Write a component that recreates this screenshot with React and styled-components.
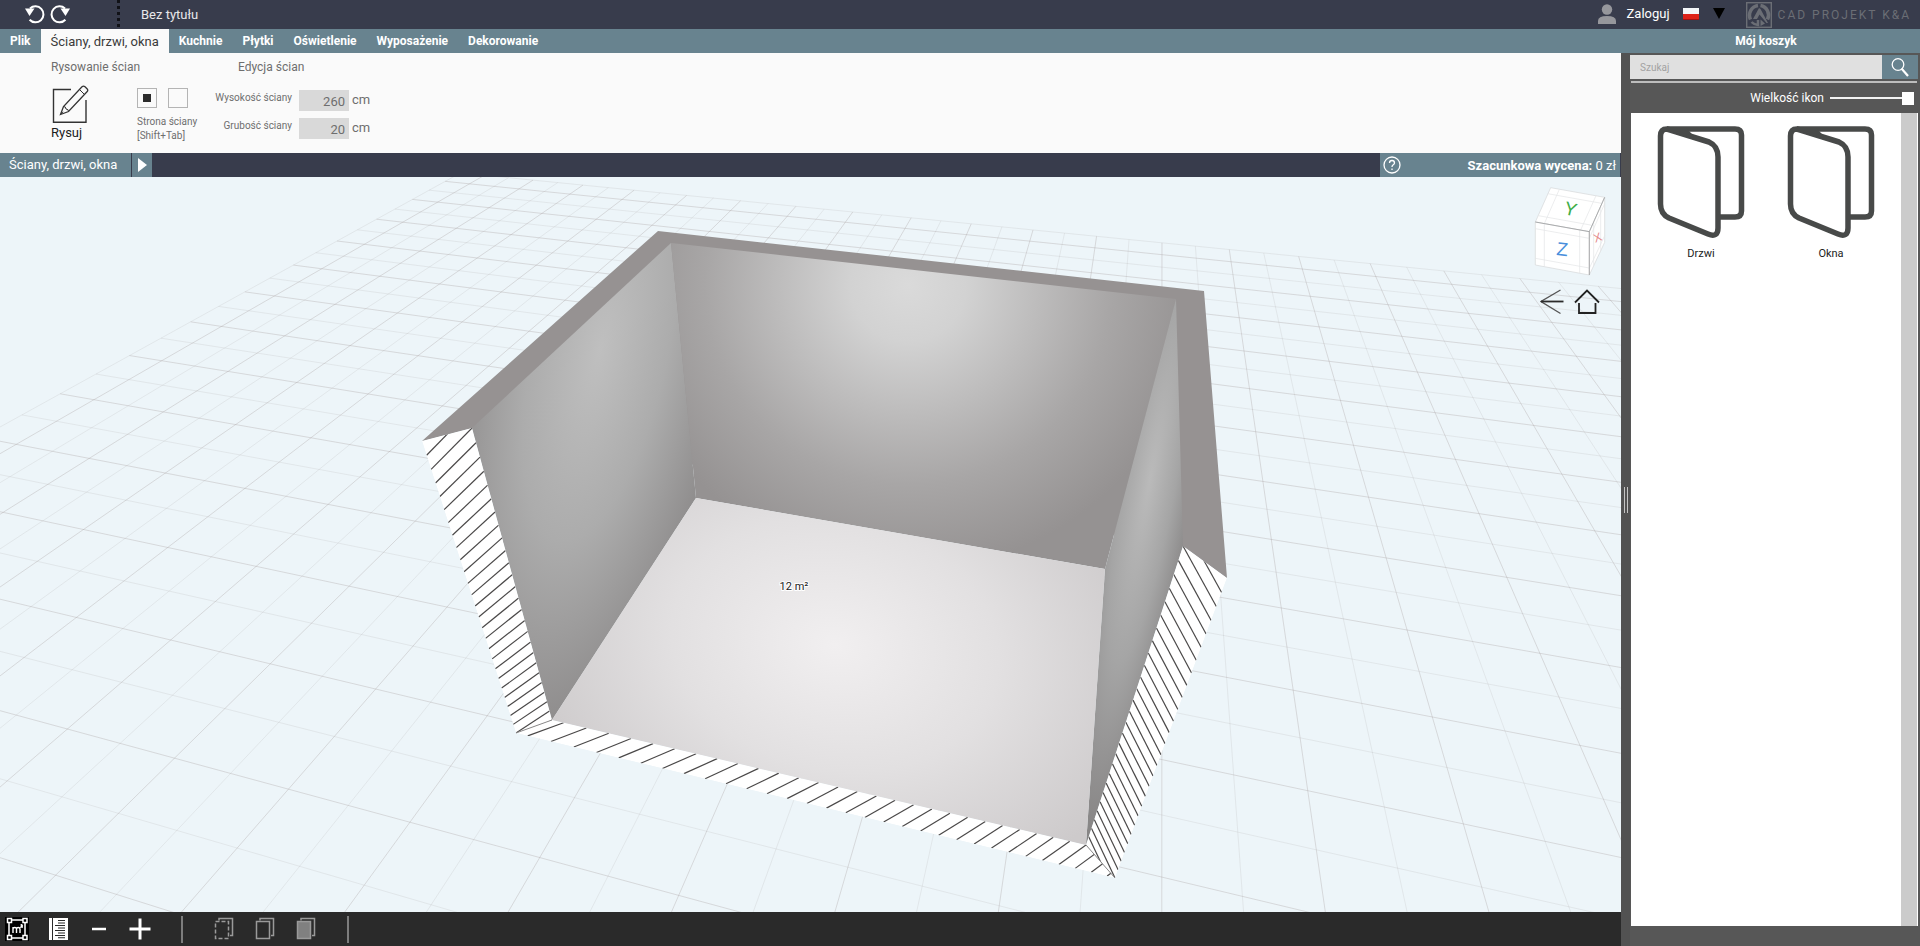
import React, { useState } from "react";
import styled, { createGlobalStyle } from "styled-components";

const menuItems = [
	"Plik",
	"Ściany, drzwi, okna",
	"Kuchnie",
	"Płytki",
	"Oświetlenie",
	"Wyposażenie",
	"Dekorowanie",
];

const products = ["Drzwi", "Okna"];

// floor plane -> view, one unit is one metre on the grid
const project = (u, v) => {
	const d = 1 - 0.012344 * u - 0.04274 * v;
	return [
		(41.774 * u - 49.667 * v + 460.5) / d,
		(2.596 * u + 9.157 * v + 172.9) / d,
	];
};

const gridLines = () => {
	const lines = [];
	for (let i = 0; i <= 52; i++) {
		const u = i / 2;
		const end = Math.min(16, (0.85 - 0.012344 * u) / 0.04274);
		lines.push({ from: project(u, 0), to: project(u, end), strong: i % 2 });
	}
	for (let i = 0; i <= 32; i++) {
		const v = i / 2;
		const end = Math.min(26, (0.85 - 0.04274 * v) / 0.012344);
		lines.push({ from: project(0, v), to: project(end, v), strong: i % 2 });
	}
	return lines;
};

const along = ([a, b], k, n, ratio) => {
	const t = (1 - Math.pow(ratio, k)) / (1 - Math.pow(ratio, n));
	return [a[0] + (b[0] - a[0]) * t, a[1] + (b[1] - a[1]) * t];
};

// section hatching between the outer and the inner edge of a cut wall
const hatch = ({ outer, inner, outerCount, innerCount, start, shift, ratio }) => {
	const lines = [];
	for (let k = start; k < outerCount + 4; k++) {
		lines.push({
			from: along(outer, k, outerCount, ratio),
			to: along(inner, k - shift, innerCount, ratio),
		});
	}
	return lines;
};

const cuts = [
	{
		id: "cut-left",
		outer: [[422, 441], [516, 733]],
		inner: [[472, 428], [552, 720]],
		outerCount: 26,
		innerCount: 25,
		start: 1,
		shift: 2,
		ratio: 0.98,
	},
	{
		id: "cut-right",
		outer: [[1227, 578], [1115, 878]],
		inner: [[1183, 546], [1086, 845]],
		outerCount: 27,
		innerCount: 27,
		start: 1,
		shift: 2,
		ratio: 0.979,
	},
	{
		id: "cut-front",
		outer: [[516, 733], [1115, 878]],
		inner: [[552, 720], [1086, 845]],
		outerCount: 31,
		innerCount: 27.5,
		start: 0.5,
		shift: 0,
		ratio: 0.987,
	},
];

const points = (list) => list.map((p) => p.join(",")).join(" ");

const Scene = () => (
	<SceneSvg viewBox="0 177 1621 735" preserveAspectRatio="xMidYMid slice">
		<defs>
			<radialGradient
				id="left-wall"
				gradientUnits="userSpaceOnUse"
				cx="0"
				cy="0"
				r="1"
				gradientTransform="translate(600 350) rotate(12) scale(135 390)"
			>
				<stop offset="0" stopColor="#bfbfbf" />
				<stop offset="0.5" stopColor="#acacac" />
				<stop offset="1" stopColor="#8e8c8c" />
			</radialGradient>
			<radialGradient
				id="back-wall"
				gradientUnits="userSpaceOnUse"
				cx="0"
				cy="0"
				r="1"
				gradientTransform="translate(908 285) rotate(5) scale(290 285)"
			>
				<stop offset="0" stopColor="#dadada" />
				<stop offset="0.2" stopColor="#d2d2d2" />
				<stop offset="0.45" stopColor="#bdbcbc" />
				<stop offset="0.7" stopColor="#a8a6a6" />
				<stop offset="1" stopColor="#959292" />
			</radialGradient>
			<radialGradient
				id="right-wall"
				gradientUnits="userSpaceOnUse"
				cx="0"
				cy="0"
				r="1"
				gradientTransform="translate(1150 480) rotate(10) scale(52 370)"
			>
				<stop offset="0" stopColor="#bababa" />
				<stop offset="0.5" stopColor="#a5a5a5" />
				<stop offset="1" stopColor="#858383" />
			</radialGradient>
			<radialGradient
				id="floor"
				gradientUnits="userSpaceOnUse"
				cx="0"
				cy="0"
				r="1"
				gradientTransform="translate(835 645) rotate(12) scale(330 250)"
			>
				<stop offset="0" stopColor="#f1eff0" />
				<stop offset="0.5" stopColor="#e2e0e1" />
				<stop offset="1" stopColor="#cdcacb" />
			</radialGradient>
			{cuts.map(({ id, outer, inner }) => (
				<clipPath id={id} key={id}>
					<polygon
						points={points([outer[0], inner[0], inner[1], outer[1]])}
					/>
				</clipPath>
			))}
		</defs>
		<g stroke="#a49c9c">
			{gridLines().map(({ from, to, strong }, i) => (
				<line
					key={i}
					x1={from[0]}
					y1={from[1]}
					x2={to[0]}
					y2={to[1]}
					strokeOpacity={strong ? 0.32 : 0.16}
				/>
			))}
		</g>
		<polygon
			fill="#969292"
			points="422,441 658,231 1204,291 1227,578 1183,546 472,428"
		/>
		<polygon
			fill="url(#left-wall)"
			points="671,243 472,428 552,720 696,498"
		/>
		<polygon
			fill="url(#back-wall)"
			points="671,243 1176,299 1105,569 696,498"
		/>
		<polygon
			fill="url(#right-wall)"
			points="1176,299 1183,546 1086,845 1105,569"
		/>
		<polygon fill="url(#floor)" points="696,498 1105,569 1086,845 552,720" />
		{cuts.map((cut) => (
			<g key={cut.id} clipPath={`url(#${cut.id})`}>
				<polygon
					fill="#ffffff"
					points={points([
						cut.outer[0],
						cut.inner[0],
						cut.inner[1],
						cut.outer[1],
					])}
				/>
				{hatch(cut).map(({ from, to }, i) => (
					<line
						key={i}
						x1={from[0]}
						y1={from[1]}
						x2={to[0]}
						y2={to[1]}
						stroke="#4a4848"
						strokeWidth="1.2"
					/>
				))}
			</g>
		))}
		<path d="M516 733L552 720M1086 845L1115 878" stroke="#8a8888" />
		<AreaText x="794" y="590" textAnchor="middle">
			12 m²
		</AreaText>
	</SceneSvg>
);

const ViewCube = () => (
	<svg width="80" height="97" viewBox="150 10 240 291">
		<g fill="#ffffff" stroke="#d4d6d8" strokeWidth="2">
			<path d="M212 24L374 53L328 156L166 127Z" />
			<path d="M166 127L328 156V286L166 256Z" />
			<path d="M374 53V188L328 286V156Z" />
		</g>
		<g fill="none" stroke="#e2e4e6" strokeWidth="2">
			<path d="M238 29L193 132M348 48L302 151M203 42L365 71M175 108L337 137" />
			<path d="M193 132V261M299 151V281M166 147L328 176M166 236L328 265" />
			<path d="M341 127V258M362 80V213M328 176L374 72M328 266L374 168" />
		</g>
		<path
			d="M166 127L328 156L374 53M328 156V286"
			fill="none"
			stroke="#8f9193"
			strokeWidth="2"
		/>
		<CubeText x="272" y="107" fill="#3fae49" transform="rotate(14 272 88)">
			Y
		</CubeText>
		<CubeText x="247" y="228" fill="#4a8fdc" transform="rotate(6 247 208)">
			Z
		</CubeText>
		<CubeText $small x="352" y="186" fill="#e58a8a" transform="rotate(-20 352 172)">
			X
		</CubeText>
	</svg>
);

const UndoIcon = ({ flip }) => (
	<svg width="20" height="20" viewBox="0 0 20 20">
		<g
			transform={flip ? "translate(20 0) scale(-1 1)" : undefined}
			fill="none"
			stroke="#ffffff"
			strokeWidth="2"
		>
			<path d="M5 4.500A8 8 0 1 1 4.600 15.800" />
			<path d="M0 4.500L9.500 4.500L4.500 12Z" fill="#ffffff" stroke="none" />
		</g>
	</svg>
);

const DrawIcon = () => (
	<svg width="38" height="38" viewBox="0 0 38 38" fill="none" stroke="#333333">
		<path d="M20 4.500H2.500V37.200H35V15" strokeWidth="1.400" />
		<path
			d="M9.500 29.500L12.500 21.500L31 1.800Q32.500 0.500 34 1.800L36 3.800Q37.500 5.300 36 6.800L17.500 26.500Z"
			strokeWidth="1.300"
		/>
		<path d="M12.500 21.500Q15 21.500 15 24Q17.500 24 17.500 26.500M28.500 4.500L33.500 9.500M9.500 29.500L12 26.800" />
	</svg>
);

const DoorIcon = () => (
	<svg
		width="88"
		height="114"
		viewBox="0 0 88 114"
		fill="none"
		stroke="#484a49"
		strokeWidth="5.5"
		strokeLinejoin="round"
	>
		<path d="M10 4H78Q84.500 4 84.500 10V86Q84.500 92 78 92H62" />
		<path d="M10 4Q3.500 4 3.500 11V79Q3.500 89 12 93L51 109Q61 113 61 103V32Q61 21 52 17Z" />
		<path d="M10 4H29L36 12Z" fill="#484a49" strokeWidth="2" />
	</svg>
);

const LayerIcon = ({ dashed, filled }) => (
	<svg width="20" height="24" viewBox="0 0 20 24" fill="none" stroke="#9a9a9a" strokeWidth="1.500">
		<path d="M5 3.500V1.500H18.500V18.500H16" />
		<path
			d="M1.500 4.500H14.500V21.500H1.500Z"
			fill={filled ? "#808080" : "none"}
			strokeDasharray={dashed ? "4 2" : undefined}
		/>
	</svg>
);

const App = () => {
	const [side, setSide] = useState("inner");
	const [active, setActive] = useState("Ściany, drzwi, okna");

	return (
		<Page>
			<GlobalStyle />
			<TopBar>
				<History>
					<IconButton aria-label="Cofnij">
						<UndoIcon />
					</IconButton>
					<IconButton aria-label="Ponów">
						<UndoIcon flip />
					</IconButton>
				</History>
				<ProjectTitle>Bez tytułu</ProjectTitle>
				<Account>
					<LoginButton>
						<svg width="18" height="20" viewBox="0 0 18 20" fill="#96979c">
							<circle cx="9" cy="5.5" r="5.2" />
							<path d="M0 20V17Q0 12 9 12T18 17V20Z" />
						</svg>
						Zaloguj
					</LoginButton>
					<LanguageButton aria-label="Język">
						<svg width="16" height="12" viewBox="0 0 16 12">
							<rect width="16" height="12" fill="#f3f6f8" />
							<rect y="6" width="16" height="6" fill="#dd2218" />
							<path d="M0 11.500H16" stroke="#a31212" />
						</svg>
						<svg width="12" height="11" viewBox="0 0 12 11">
							<path d="M0 0H12L6 11Z" fill="#000000" />
						</svg>
					</LanguageButton>
				</Account>
				<Brand href="#">
					<svg width="26" height="26" viewBox="0 0 26 26" fill="none" stroke="#6b6e75">
						<rect x="0.7" y="0.7" width="24.600" height="24.600" strokeWidth="1.400" />
						<path d="M12 3.500A9.800 9.800 0 0 0 4.500 17.500" strokeWidth="3.500" />
						<path d="M14.500 3.500A9.800 9.800 0 0 1 21.500 17.500" strokeWidth="3.500" />
						<path d="M5.500 20A9.800 9.800 0 0 0 12 23V18" strokeWidth="2.500" />
						<path d="M13 6L7 17H11L13.500 12.500L20.500 21H22L14.500 7ZM14.500 17.500V24L19 21.500Z" fill="#6b6e75" stroke="none" />
					</svg>
					<BrandName>CAD PROJEKT K&amp;A</BrandName>
				</Brand>
			</TopBar>
			<MenuBar>
				<Menu>
					{menuItems.map((item) => (
						<MenuButton
							key={item}
							$active={item === active}
							onClick={() => setActive(item)}
						>
							{item}
						</MenuButton>
					))}
				</Menu>
				<CartButton>Mój koszyk</CartButton>
			</MenuBar>
			<Main>
				<Workspace>
					<Ribbon>
						<RibbonGroup>
							<GroupTitle>Rysowanie ścian</GroupTitle>
							<GroupRow>
								<DrawButton>
									<DrawIcon />
									Rysuj
								</DrawButton>
								<SidePicker>
									<SideChoices>
										<SideRadio
											type="radio"
											name="side"
											aria-label="Strona wewnętrzna"
											checked={side === "inner"}
											onChange={() => setSide("inner")}
										/>
										<SideRadio
											type="radio"
											name="side"
											aria-label="Strona zewnętrzna"
											checked={side === "outer"}
											onChange={() => setSide("outer")}
										/>
									</SideChoices>
									<span>Strona ściany</span>
									<span>[Shift+Tab]</span>
								</SidePicker>
							</GroupRow>
						</RibbonGroup>
						<RibbonGroup>
							<GroupTitle $indent>Edycja ścian</GroupTitle>
							<Fields>
								<label htmlFor="wall-height">Wysokość ściany</label>
								<input id="wall-height" defaultValue="260" />
								<Unit>cm</Unit>
								<label htmlFor="wall-depth">Grubość ściany</label>
								<input id="wall-depth" defaultValue="20" />
								<Unit>cm</Unit>
							</Fields>
						</RibbonGroup>
					</Ribbon>
					<StatusBar>
						<Crumb>Ściany, drzwi, okna</Crumb>
						<PlayButton aria-label="Dalej">
							<svg width="9" height="14" viewBox="0 0 9 14">
								<path d="M0 0L9 7L0 14Z" fill="#ffffff" />
							</svg>
						</PlayButton>
						<Estimate>
							<IconButton aria-label="Pomoc">
								<svg width="18" height="18" viewBox="0 0 18 18" fill="none" stroke="#ffffff" strokeWidth="1.300">
									<circle cx="9" cy="9" r="8" />
									<path d="M6.500 7Q6.500 4.500 9 4.500T11.500 7Q11.500 8 10 9Q9 9.700 9 11M9 12.400V14" />
								</svg>
							</IconButton>
							<span>
								<strong>Szacunkowa wycena:</strong> 0 zł
							</span>
						</Estimate>
					</StatusBar>
					<Viewport>
						<Scene />
						<Navigator>
							<ViewCube />
							<NavigatorButtons>
								<IconButton aria-label="Wstecz">
									<svg width="24" height="26" viewBox="0 0 24 26" fill="none" stroke="#2b2b2b" strokeWidth="1.300">
										<path d="M20.500 1L1 12.500L20.500 24.500" stroke="#555555" />
										<path d="M1 12.500H23.500" strokeWidth="1.800" />
									</svg>
								</IconButton>
								<IconButton aria-label="Widok domyślny">
									<svg width="26" height="26" viewBox="0 0 26 26" fill="none" stroke="#222222" strokeWidth="1.800">
										<path d="M1 13.500L13 1.500L25 13.500M5 14V24H21.500V14" />
									</svg>
								</IconButton>
							</NavigatorButtons>
						</Navigator>
					</Viewport>
					<ToolBar>
						<ToolButton $pressed aria-label="Powierzchnia">
							<svg width="24" height="24" viewBox="0 0 24 24" fill="none" stroke="#ffffff">
								<path d="M6 3H18M6 21H18M4 6V18M20 6V18" strokeWidth="1.500" />
								<path d="M2.500 1.500H6.500V5.500H2.500ZM18 1.500H22V5.500H18ZM2.500 18.500H6.500V22.500H2.500ZM18 18.500H22V22.500H18Z" strokeWidth="1.500" />
								<path d="M8 16V10M8 12Q8 10.500 9.800 10.500T11.500 12V16M11.500 12Q11.500 10.500 13.200 10.500T15 12V16M15.800 8.500Q16.500 7.200 17.300 8.300L16 10H18" strokeWidth="1.400" />
							</svg>
						</ToolButton>
						<ToolButton aria-label="Miarka">
							<svg width="19" height="22" viewBox="0 0 19 22">
								<path d="M0 0H19V22H0Z" fill="#ffffff" />
								<path d="M3.500 0V22" stroke="#2a2a2a" />
								<path d="M9 2.500H16M9 5H16M6 7.500H16M9 10H16M6 12.500H16M9 15H16M6 17.500H16M9 19.800H16" stroke="#2a2a2a" strokeWidth="1.100" />
							</svg>
						</ToolButton>
						<ToolButton aria-label="Oddal">
							<svg width="22" height="22" viewBox="0 0 22 22">
								<path d="M4 11H18" stroke="#ffffff" strokeWidth="2.500" />
							</svg>
						</ToolButton>
						<ToolButton aria-label="Przybliż">
							<svg width="22" height="22" viewBox="0 0 22 22">
								<path d="M0.500 11H21.500M11 0.500V21.500" stroke="#ffffff" strokeWidth="3" />
							</svg>
						</ToolButton>
						<Divider />
						<ToolButton aria-label="Ukryte ściany">
							<LayerIcon dashed />
						</ToolButton>
						<ToolButton aria-label="Obrys ścian">
							<LayerIcon />
						</ToolButton>
						<ToolButton aria-label="Pełne ściany">
							<LayerIcon filled />
						</ToolButton>
						<Divider />
					</ToolBar>
				</Workspace>
				<Splitter>
					<i />
					<i />
				</Splitter>
				<SidePanel>
					<Search>
						<input placeholder="Szukaj" aria-label="Szukaj" />
						<button aria-label="Szukaj">
							<svg width="18" height="19" viewBox="0 0 18 19" fill="none" stroke="#ffffff">
								<circle cx="7" cy="6.500" r="5.800" strokeWidth="1.300" />
								<path d="M10.500 10.500L17 18" strokeWidth="2.200" />
							</svg>
						</button>
					</Search>
					<SizeRow>
						<label htmlFor="icon-size">Wielkość ikon</label>
						<input id="icon-size" type="range" defaultValue="100" />
					</SizeRow>
					<Catalog>
						<Tiles>
							{products.map((name) => (
								<Tile key={name}>
									<DoorIcon />
									{name}
								</Tile>
							))}
						</Tiles>
						<ScrollTrack />
					</Catalog>
				</SidePanel>
			</Main>
		</Page>
	);
};

export default App;

const GlobalStyle = createGlobalStyle`
	* {
		box-sizing: border-box;
	}

	body {
		margin: 0;
		font-family: "Roboto", sans-serif;
		font-size: 13px;
	}

	button,
	input {
		font: inherit;
		color: inherit;
		border: 0;
		margin: 0;
		padding: 0;
		background: none;
		border-radius: 0;
	}

	svg {
		display: block;
	}
`;

const Page = styled.div`
	display: flex;
	flex-direction: column;
	height: 100vh;
	overflow: hidden;
`;

const TopBar = styled.header`
	display: flex;
	align-items: center;
	height: 29px;
	background: #383c4c;
	color: white;
`;

const IconButton = styled.button`
	display: flex;
	align-items: center;
	justify-content: center;
`;

const History = styled.div`
	display: flex;
	align-items: center;
	gap: 5px;
	width: 120px;
	height: 27px;
	padding-left: 25px;
	align-self: flex-start;
	border-right: 3px dotted #111217;
`;

const ProjectTitle = styled.span`
	margin-left: 21px;
	flex: 1;
	color: #e8e8ea;
`;

const Account = styled.div`
	display: flex;
	align-items: center;
	gap: 13px;
	padding-bottom: 2px;
`;

const LoginButton = styled.button`
	display: flex;
	align-items: center;
	gap: 11px;
`;

const LanguageButton = styled.button`
	display: flex;
	align-items: center;
	gap: 14px;
`;

const Brand = styled.a`
	display: flex;
	align-items: center;
	gap: 6px;
	margin-left: 21px;
	padding-right: 9px;
	color: #6b6e75;
	text-decoration: none;
`;

const BrandName = styled.span`
	letter-spacing: 2px;
	font-size: 12px;
`;

const MenuBar = styled.div`
	display: flex;
	height: 24px;
	background: #68838f;
	color: white;
`;

const Menu = styled.nav`
	display: flex;
	flex: 1;
`;

const MenuButton = styled.button`
	padding: 0 10px;
	background: ${({ $active }) => ($active ? "#fafafa" : "transparent")};
	color: ${({ $active }) => ($active ? "#3a3a3a" : "white")};
	font-size: ${({ $active }) => ($active ? "13px" : "12px")};
	font-weight: ${({ $active }) => ($active ? 400 : 700)};
`;

const CartButton = styled.button`
	width: 308px;
	font-size: 12px;
	font-weight: 700;
`;

const Main = styled.div`
	display: flex;
	flex: 1;
	min-height: 0;
`;

const Workspace = styled.main`
	display: flex;
	flex-direction: column;
	flex: 1;
	min-width: 0;
`;

const Ribbon = styled.section`
	display: flex;
	height: 100px;
	padding-left: 51px;
	gap: 29px;
	background: #fafafa;
	color: #6e6e6e;
`;

const RibbonGroup = styled.div`
	display: flex;
	flex-direction: column;
`;

const GroupTitle = styled.h2`
	margin: 4px 0 8px;
	padding-left: ${({ $indent }) => ($indent ? "16px" : 0)};
	font-size: 12px;
	line-height: 20px;
	font-weight: 400;
`;

const GroupRow = styled.div`
	display: flex;
	gap: 48px;
`;

const DrawButton = styled.button`
	display: flex;
	flex-direction: column;
	align-items: flex-start;
	color: #1c1c1c;
	line-height: 20px;
`;

const SidePicker = styled.div`
	display: flex;
	flex-direction: column;
	width: 56px;
	padding-top: 3px;
	font-size: 10px;
	line-height: 14px;
	white-space: nowrap;
`;

const SideChoices = styled.div`
	display: flex;
	gap: 11px;
	margin-bottom: 7px;
`;

const SideRadio = styled.input`
	appearance: none;
	flex: none;
	width: 20px;
	height: 20px;
	border: 1px solid #b4b4b4;

	&:checked {
		background: #2c2c2c content-box;
		padding: 5px;
	}
`;

const Fields = styled.div`
	display: grid;
	grid-template-columns: 70px 50px auto;
	grid-auto-rows: 21px;
	gap: 7px;
	padding-top: 5px;
	font-size: 10px;

	label {
		justify-self: end;
		line-height: 16px;
		white-space: nowrap;
	}

	input {
		width: 50px;
		padding: 2px 4px 0 0;
		background: #d9d9d9;
		font-size: 13px;
		text-align: right;
	}
`;

const Unit = styled.span`
	margin-left: -4px;
	font-size: 13px;
	line-height: 20px;
`;

const StatusBar = styled.div`
	display: flex;
	height: 24px;
	background: #383c4c;
	color: white;
`;

const Crumb = styled.span`
	width: 131px;
	padding-left: 9px;
	line-height: 24px;
	background: #68838f;
	white-space: nowrap;
`;

const PlayButton = styled.button`
	display: flex;
	align-items: center;
	justify-content: center;
	width: 20px;
	margin-left: 1px;
	background: #68838f;
`;

const Estimate = styled.div`
	display: flex;
	align-items: center;
	justify-content: space-between;
	width: 240px;
	margin: 0 1px 0 auto;
	padding: 0 4px 0 3px;
	background: #68838f;
`;

const Viewport = styled.div`
	position: relative;
	flex: 1;
	min-height: 0;
	background: #edf5f9;
`;

const SceneSvg = styled.svg`
	width: 100%;
	height: 100%;
`;

const AreaText = styled.text`
	font-size: 11px;
	fill: #222222;
	stroke: #ffffff;
	stroke-width: 2px;
	paint-order: stroke;
`;

const CubeText = styled.text`
	font-family: "Liberation Sans", sans-serif;
	font-size: ${({ $small }) => ($small ? "36px" : "56px")};
	text-anchor: middle;
`;

const Navigator = styled.div`
	position: absolute;
	top: 6px;
	right: 11px;
`;

const NavigatorButtons = styled.div`
	display: flex;
	gap: 10px;
	padding: 9px 0 0 10px;
`;

const ToolBar = styled.footer`
	display: flex;
	align-items: center;
	gap: 17px;
	height: 34px;
	padding-left: 5px;
	background: #2a2a2a;
`;

const ToolButton = styled.button`
	display: flex;
	align-items: center;
	justify-content: center;
	width: 24px;
	height: 24px;
	background: ${({ $pressed }) => ($pressed ? "black" : "none")};
`;

const Divider = styled.span`
	width: 2px;
	height: 27px;
	margin: 0 12px;
	background: #7d7d7d;
`;

const Splitter = styled.div`
	display: flex;
	align-items: center;
	justify-content: center;
	gap: 2px;
	width: 9px;
	background: #525252;

	i {
		width: 1px;
		height: 26px;
		background: #c4c4c4;
	}
`;

const SidePanel = styled.aside`
	display: flex;
	flex-direction: column;
	width: 290px;
	padding: 2px 2px 20px 0;
	background: #575757;
	color: white;
`;

const Search = styled.div`
	display: flex;
	height: 24px;

	input {
		flex: 1;
		min-width: 0;
		padding-left: 10px;
		background: #e0e0e0;
		color: #555555;
		font-size: 10px;
	}

	input::placeholder {
		color: #a2a2a2;
	}

	button {
		display: flex;
		align-items: center;
		justify-content: center;
		width: 36px;
		background: #68838f;
	}
`;

const SizeRow = styled.div`
	display: flex;
	align-items: center;
	justify-content: flex-end;
	gap: 6px;
	height: 32px;
	margin: 2px 1px 0;
	padding-right: 3px;
	border-top: 2px solid #bdbdbd;

	label {
		font-size: 12px;
	}

	input {
		appearance: none;
		width: 84px;
		height: 13px;
		background: linear-gradient(#f2f2f2, #f2f2f2) center / 100% 2px no-repeat;
	}

	input::-webkit-slider-thumb {
		appearance: none;
		width: 12px;
		height: 13px;
		background: white;
	}
`;

const Catalog = styled.div`
	display: flex;
	flex: 1;
	margin-left: 1px;
	background: white;
	color: #222222;
`;

const Tiles = styled.div`
	display: flex;
	flex: 1;
	align-items: flex-start;
	padding: 12px 5px;
`;

const Tile = styled.button`
	display: flex;
	flex-direction: column;
	align-items: center;
	gap: 8px;
	flex: 1;
	font-size: 11px;
`;

const ScrollTrack = styled.div`
	width: 16px;
	margin-right: 1px;
	background: #cbcbcb;
`;
